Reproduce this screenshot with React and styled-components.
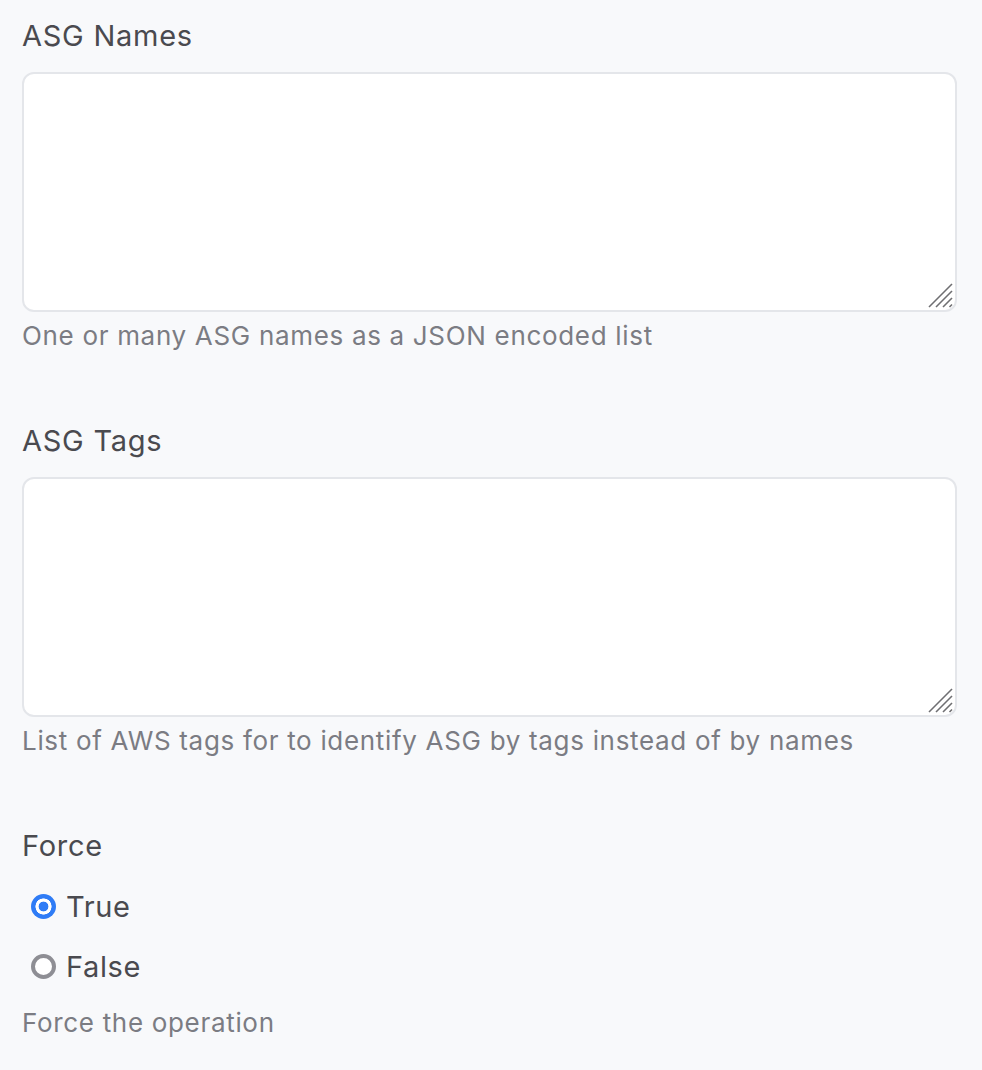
import React, { useState } from 'react';
import styled, { createGlobalStyle } from 'styled-components';

const GlobalStyle = createGlobalStyle`
  html, body {
    margin: 0;
    padding: 0;
    background: #f8f9fb;
  }
  body {
    font-family: Inter, "Noto Sans", "Liberation Sans", sans-serif;
  }
`;

const Form = styled.form`
  display: flex;
  flex-direction: column;
  padding: 16px 25px 0 22px;
  min-height: 1070px;
  box-sizing: border-box;
  background: #f8f9fb;
`;

const Field = styled.div`
  display: flex;
  flex-direction: column;
  margin-bottom: ${({ last }) => (last ? '0' : '67px')};
`;

const Label = styled.label`
  font-size: 29px;
  line-height: 40px;
  color: #4a4a4f;
  letter-spacing: 0.75px;
`;

const AreaWrap = styled.div`
  position: relative;
  margin-top: 16px;
  height: 240px;
`;

const TextArea = styled.textarea`
  display: block;
  width: 100%;
  height: 100%;
  box-sizing: border-box;
  border: 2px solid #e4e6ea;
  border-radius: 12px;
  background: #fff;
  resize: none;
  outline: none;
  padding: 10px 14px;
  font: inherit;
  font-size: 26px;
`;

const Grip = styled.svg`
  position: absolute;
  right: 4px;
  bottom: 4px;
  width: 25px;
  height: 25px;
  pointer-events: none;
`;

const Help = styled.div`
  margin-top: 6px;
  font-size: 26px;
  line-height: 36px;
  color: #7b7c83;
  letter-spacing: 0.68px;
`;

const Options = styled.div`
  display: flex;
  flex-direction: column;
  margin-top: 10px;
  margin-bottom: 3px;
`;

const Option = styled.label`
  display: flex;
  align-items: center;
  height: 60px;
  padding-left: 9px;
  font-size: 29px;
  color: #4a4a4f;
  letter-spacing: 0.6px;
  cursor: pointer;
`;

const Radio = styled.input`
  appearance: none;
  -webkit-appearance: none;
  margin: 0 10px 0 0;
  width: 25px;
  height: 25px;
  border-radius: 50%;
  box-sizing: border-box;
  border: 4px solid #8e8e94;
  background: #fff;
  cursor: pointer;

  &:checked {
    border: none;
    background: radial-gradient(circle, #2f7cf6 0 4.6px, #fff 5.2px 7.8px, #2f7cf6 8.3px);
  }
`;

const ResizeGrip = () => (
  <Grip viewBox="0 0 25 25">
    <g stroke="#6f6f72" strokeWidth="1.6" strokeLinecap="butt">
      <line x1="1" y1="24" x2="24" y2="1" />
      <line x1="8" y1="24" x2="24" y2="8" />
      <line x1="15" y1="24" x2="24" y2="15" />
      <line x1="21.5" y1="24" x2="24" y2="21.5" />
    </g>
  </Grip>
);

const AreaField = ({ label, help }) => (
  <Field>
    <Label>{label}</Label>
    <AreaWrap>
      <TextArea />
      <ResizeGrip />
    </AreaWrap>
    <Help>{help}</Help>
  </Field>
);

export default function App() {
  const [force, setForce] = useState('true');

  return (
    <>
      <GlobalStyle />
      <Form onSubmit={(e) => e.preventDefault()}>
        <AreaField label="ASG Names" help="One or many ASG names as a JSON encoded list" />
        <AreaField
          label="ASG Tags"
          help="List of AWS tags for to identify ASG by tags instead of by names"
        />
        <Field last>
          <Label>Force</Label>
          <Options>
            {['true', 'false'].map((v) => (
              <Option key={v}>
                <Radio
                  type="radio"
                  name="force"
                  value={v}
                  checked={force === v}
                  onChange={() => setForce(v)}
                />
                {v === 'true' ? 'True' : 'False'}
              </Option>
            ))}
          </Options>
          <Help>Force the operation</Help>
        </Field>
      </Form>
    </>
  );
}
